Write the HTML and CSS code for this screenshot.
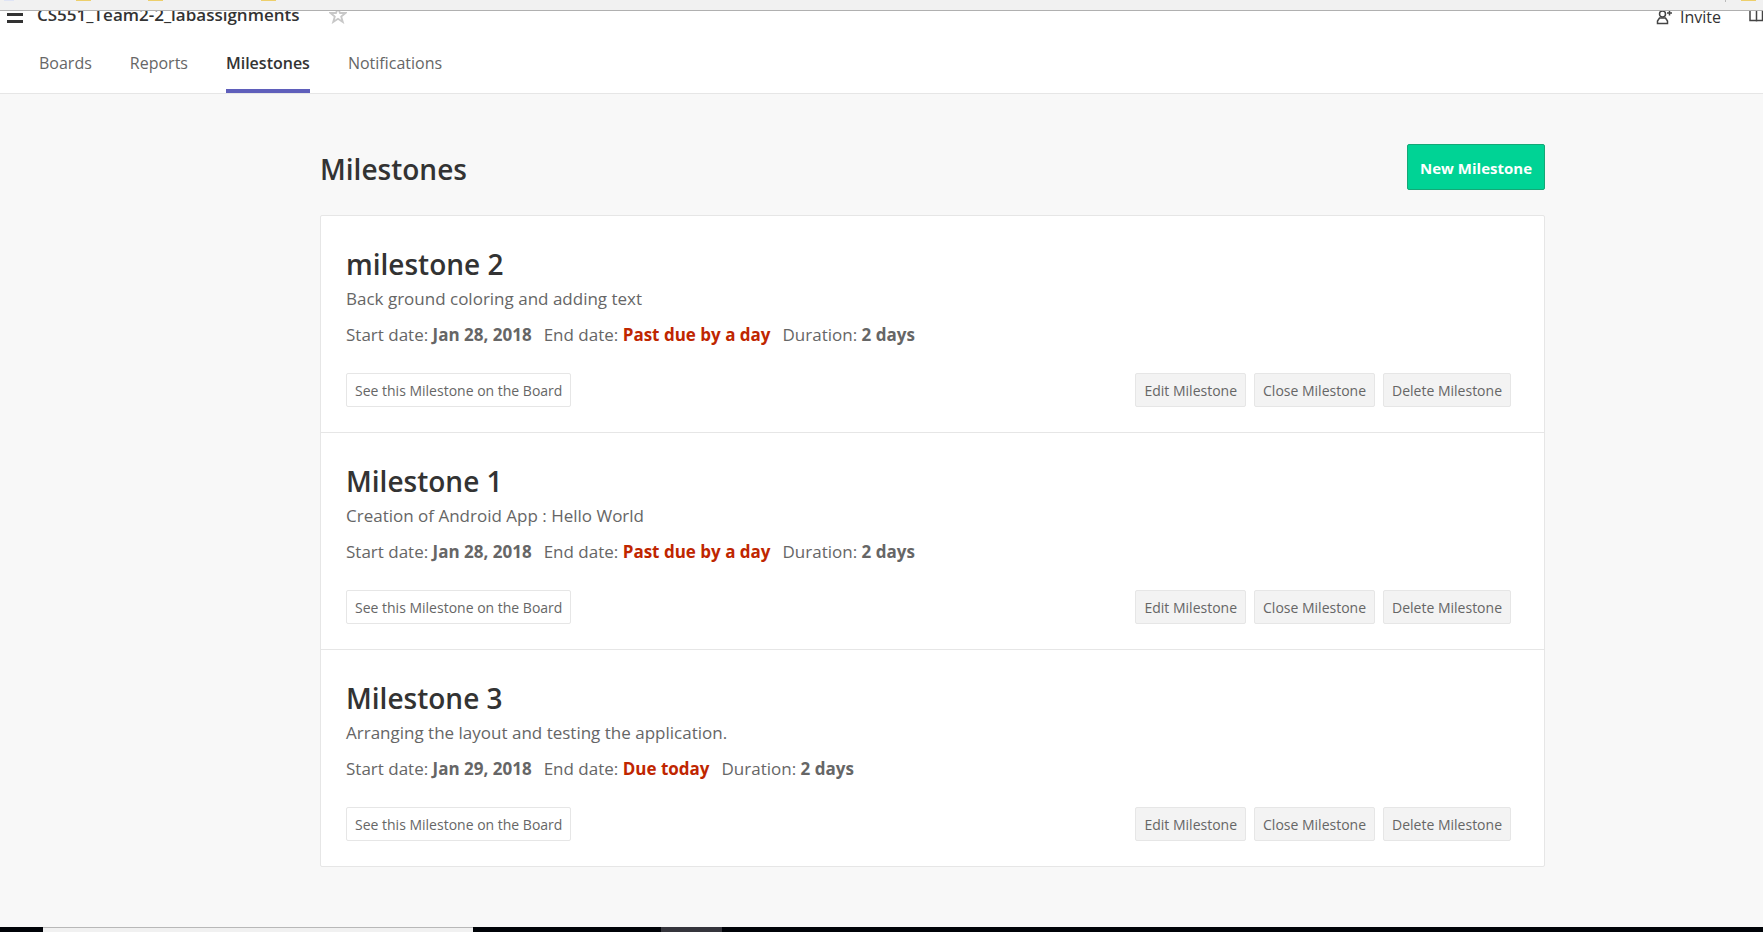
FILE: index.html
```html
<!DOCTYPE html>
<html lang="en">
<head>
<meta charset="utf-8">
<title>Milestones</title>
<link rel="stylesheet" href="styles.css">
</head>
<body>
<div class="bookmarks" aria-hidden="true">
  <span class="dots"></span>
  <span class="folder first"></span><span class="folder second"></span><span class="folder third"></span>
  <span class="divider"></span><span class="folder last"></span>
</div>
<header class="header">
  <div class="topbar">
    <button class="icon-button menu" aria-label="Menu"><svg width="16" height="10" viewBox="0 0 16 10"><path d="M0 1.500h16M0 8.500h16" stroke="#333" stroke-width="3"/></svg></button>
    <strong class="project">CS551_Team2-2_labassignments</strong>
    <button class="icon-button star" aria-label="Favorite"><svg width="18" height="18" viewBox="0 0 18 18"><path d="M9 2l2 5h5.500l-4.300 3.500 1.600 5.500L9 12.800 4.200 16l1.600-5.500L1.500 7H7z" fill="none" stroke="#c8c8c8" stroke-width="1.800"/></svg></button>
    <a class="invite" href="#"><svg width="16" height="18" viewBox="0 0 16 18" fill="none" stroke="#444" stroke-width="1.500"><circle cx="6.500" cy="6" r="3"/><path d="M1.500 15.500v-2.500l2-3h6l2 3v2.500zM11 5h5M13.500 2.500v5"/></svg>Invite</a>
    <a class="guide" href="#" aria-label="Guide"><svg width="14" height="16" viewBox="0 0 14 16" fill="none" stroke="#444" stroke-width="1.500"><path d="M7.500 3v11.500M7.500 3Q4 1.500 1 2v11.500h13M7.500 3q3-1.500 6-1v11.500"/></svg></a>
  </div>
  <nav class="tabs">
    <a href="#">Boards</a>
    <a href="#">Reports</a>
    <a class="active" href="#" aria-current="page">Milestones</a>
    <a href="#">Notifications</a>
  </nav>
</header>
<main class="content">
  <div class="heading">
    <h1>Milestones</h1>
    <button class="primary">New Milestone</button>
  </div>
  <section class="panel">
    <article class="milestone">
      <h2>milestone 2</h2>
      <p>Back ground coloring and adding text</p>
      <div class="dates"><span>Start date: <b>Jan 28, 2018</b></span><span>End date: <b class="due">Past due by a day</b></span><span>Duration: <b>2 days</b></span></div>
      <div class="actions"><button class="btn board">See this Milestone on the Board</button><button class="btn">Edit Milestone</button><button class="btn">Close Milestone</button><button class="btn">Delete Milestone</button></div>
    </article>
    <article class="milestone">
      <h2>Milestone 1</h2>
      <p>Creation of Android App : Hello World</p>
      <div class="dates"><span>Start date: <b>Jan 28, 2018</b></span><span>End date: <b class="due">Past due by a day</b></span><span>Duration: <b>2 days</b></span></div>
      <div class="actions"><button class="btn board">See this Milestone on the Board</button><button class="btn">Edit Milestone</button><button class="btn">Close Milestone</button><button class="btn">Delete Milestone</button></div>
    </article>
    <article class="milestone">
      <h2>Milestone 3</h2>
      <p>Arranging the layout and testing the application.</p>
      <div class="dates"><span>Start date: <b>Jan 29, 2018</b></span><span>End date: <b class="due">Due today</b></span><span>Duration: <b>2 days</b></span></div>
      <div class="actions"><button class="btn board">See this Milestone on the Board</button><button class="btn">Edit Milestone</button><button class="btn">Close Milestone</button><button class="btn">Delete Milestone</button></div>
    </article>
  </section>
</main>
<footer class="taskbar"><span class="search"></span><span class="task"></span></footer>
</body>
</html>
```
FILE: styles.css
```css
* { box-sizing: border-box; }
body {
  margin: 0;
  min-height: 100vh;
  display: flex;
  flex-direction: column;
  background: #f8f8f8;
  color: #666;
  font: 17px/28px "Segoe UI", "Open Sans", "Noto Sans", sans-serif;
}
a { color: inherit; text-decoration: none; }
button { font: inherit; color: inherit; cursor: pointer; }
svg { display: block; flex: none; }

.bookmarks {
  display: flex;
  height: 11px;
  background: #f1f1f1;
  border-bottom: 1px solid #b0b0b0;
}
.dots { width: 10px; height: 1px; margin-left: 4px; background: #dfe4f5; }
.folder { width: 15px; height: 1px; background: #edcf6b; }
.first { margin-left: 62px; }
.second { margin-left: 57px; }
.third { margin-left: 98px; }
.divider { width: 1px; height: 2px; margin-left: auto; background: #bbb; }
.last { margin: 0 7px 0 15px; }

.header { background: #fff; border-bottom: 1px solid #e6e6e6; }
.topbar {
  display: flex;
  align-items: flex-end;
  height: 18px;
  padding-left: 7px;
  overflow: hidden;
  color: #333;
}
.topbar > * { display: flex; align-items: center; height: 28px; }
.icon-button { padding: 0; border: 0; background: none; }
.menu { padding-top: 6px; }
.project { margin: 0 29px 0 14px; font-weight: 600; }
.invite { gap: 8px; margin-left: auto; padding-top: 3px; font-size: 16px; }
.guide { margin-left: 28px; }

.tabs { display: flex; gap: 38px; padding: 18px 39px 0; font-size: 16px; }
.tabs a { height: 46px; padding-top: 2px; border-bottom: 4px solid transparent; }
.tabs .active { color: #333; font-weight: 600; border-color: #5f5fbb; }

.content { flex: 1; padding: 50px 218px 60px 320px; }
.heading { display: flex; align-items: center; justify-content: space-between; }
h1, h2 { margin: 0; color: #333; font-size: 28px; line-height: 40px; font-weight: 600; }
h1 { padding-top: 4px; }
.primary {
  height: 46px;
  padding: 1px 12px 0;
  border: 1px solid #15a877;
  border-radius: 2px;
  background: #00d395;
  color: #fff;
  font-size: 15px;
  font-weight: 700;
}
.panel { margin-top: 25px; background: #fff; border: 1px solid #e6e6e6; border-radius: 2px; }
.milestone { padding: 28px 33px 25px 25px; }
.milestone + .milestone { border-top: 1px solid #e6e6e6; }
.milestone p { margin: 1px 0 0; }
.dates { display: flex; gap: 12px; margin-top: 8px; }
.due { color: #bf2600; }
.actions { display: flex; gap: 8px; margin-top: 24px; }
.btn {
  height: 34px;
  padding: 1px 8px 0;
  border: 1px solid #e6e6e6;
  border-radius: 2px;
  background: #f3f3f3;
  font-size: 14px;
}
.board { margin-right: auto; background: #fff; }

.taskbar { display: flex; height: 5px; background: #000308; }
.search { width: 430px; margin-left: 43px; background: #f1f1f1; border-top: 1px solid #b8b8b8; }
.task { width: 61px; margin-left: 188px; background: #35353c; }
```
